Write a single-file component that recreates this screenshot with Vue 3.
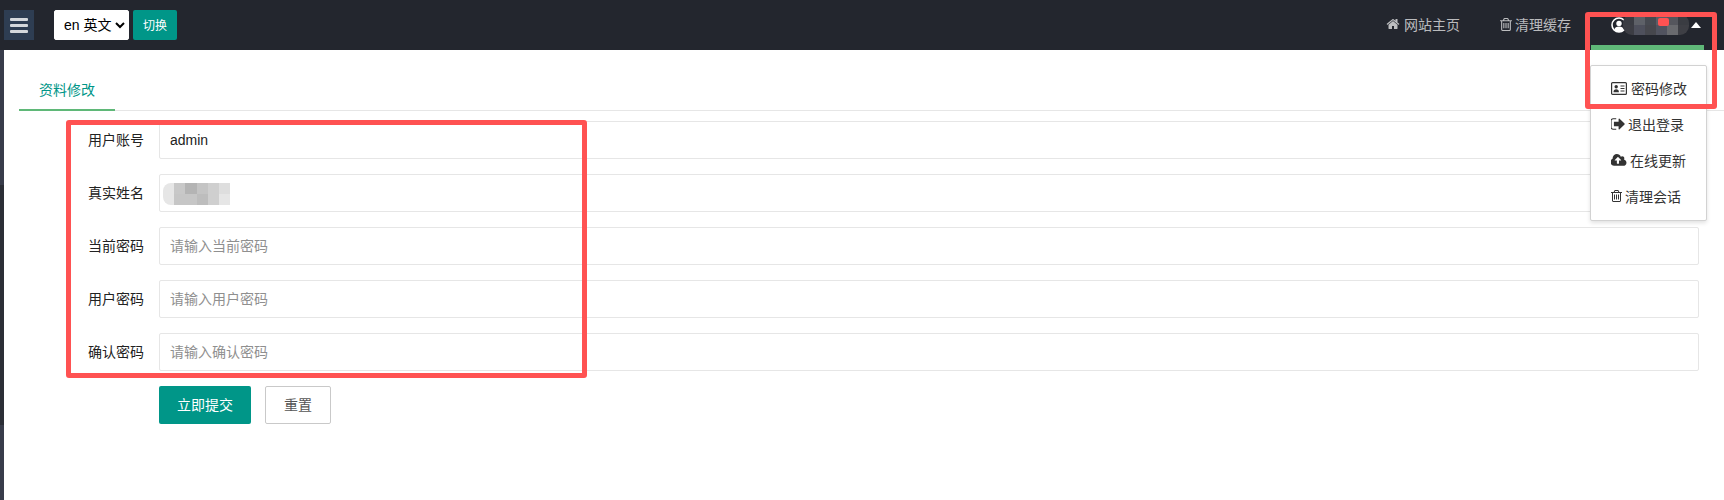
<script setup>
const fields = [
  { label: '用户账号', value: 'admin', placeholder: '' },
  { label: '真实姓名', value: '', placeholder: '', masked: true },
  { label: '当前密码', value: '', placeholder: '请输入当前密码' },
  { label: '用户密码', value: '', placeholder: '请输入用户密码' },
  { label: '确认密码', value: '', placeholder: '请输入确认密码' }
]

// pixelated patches over the user name
const navMosaic = ['#3a3c43', '#5e6168', '#474a51', '#5b5e66', '#55565d', '#3a3c42', '#3c3d44', '#4e505c', '#46474d', '#51535f', '#696a6e', '#3e3f45']
const formMosaic = ['#e6e6e6', '#c8c8c8', '#b4b4b4', '#c4c4c4', '#cfcfcf', '#dedede', '#e6e6e6', '#c6c6c6', '#c6c6c6', '#bdbdbd', '#cfcfcf', '#e6e6e6']

const homePath = 'M1472 992v480q0 26-19 45t-45 19h-384v-384h-256v384h-384q-26 0-45-19t-19-45v-480q0-1 .5-3t.5-3l575-474 575 474q1 2 1 6zm223-69l-62 74q-8 9-21 11h-3q-13 0-21-7l-692-577-692 577q-12 8-24 7-13-2-21-11l-62-74q-8-10-7-23.5t11-21.5l719-599q32-26 76-26t76 26l244 204v-195q0-14 9-23t23-9h192q14 0 23 9t9 23v408l219 182q10 8 11 21.5t-7 23.5z'
const trashPath = 'M704 736v576q0 14-9 23t-23 9h-64q-14 0-23-9t-9-23v-576q0-14 9-23t23-9h64q14 0 23 9t9 23zm256 0v576q0 14-9 23t-23 9h-64q-14 0-23-9t-9-23v-576q0-14 9-23t23-9h64q14 0 23 9t9 23zm256 0v576q0 14-9 23t-23 9h-64q-14 0-23-9t-9-23v-576q0-14 9-23t23-9h64q14 0 23 9t9 23zm128 724v-948h-896v948q0 22 7 40.5t14.5 27 10.5 8.5h832q3 0 10.5-8.5t14.5-27 7-40.5zm-672-1076h448l-48-117q-7-9-17-11h-317q-10 2-17 11zm928 32v64q0 14-9 23t-23 9h-96v948q0 83-47 143.5t-113 60.5h-832q-66 0-113-58.5t-47-141.5v-952h-96q-14 0-23-9t-9-23v-64q0-14 9-23t23-9h309l70-167q15-37 54-63t79-26h320q40 0 79 26t54 63l70 167h309q14 0 23 9t9 23z'
const signOutPath = 'M704 1440q0 4 1 20t.5 26.5-3 23.5-10 19.5-20.5 6.5h-320q-119 0-203.5-84.5t-84.5-203.5v-704q0-119 84.5-203.5t203.5-84.5h320q13 0 22.5 9.5t9.5 22.5q0 4 1 20t.5 26.5-3 23.5-10 19.5-20.5 6.5h-320q-66 0-113 47t-47 113v704q0 66 47 113t113 47h312l11.5 1 11.5 3 8 5.5 7 9 2 13.5zm928-544q0 26-19 45l-544 544q-19 19-45 19t-45-19-19-45v-288h-448q-26 0-45-19t-19-45v-384q0-26 19-45t45-19h448v-288q0-26 19-45t45-19 45 19l544 544q19 19 19 45z'
const cloudPath = 'M1216 864q0-14-9-23l-352-352q-9-9-23-9t-23 9l-351 351q-10 12-10 24 0 14 9 23t23 9h224v352q0 13 9.5 22.5t22.5 9.5h192q13 0 22.5-9.5t9.5-22.5v-352h224q13 0 22.5-9.5t9.5-22.5zm640 288q0 159-112.5 271.5t-271.5 112.5h-1088q-185 0-316.5-131.5t-131.5-316.5q0-130 70-240t188-165q-2-30-2-43 0-212 150-362t362-150q156 0 285.5 87t188.5 231q71-62 166-62 106 0 181 75t75 181q0 76-41 138 130 31 213.5 135.5t83.5 238.5z'
</script>

<template>
  <div class="page">
    <header class="top">
      <button class="menu-btn" type="button"><span></span><span></span><span></span></button>
      <select class="lang">
        <option>en 英文</option>
      </select>
      <button class="switch-btn" type="button">切换</button>

      <nav class="top-nav">
        <a class="nav-item">
          <svg class="ico" width="14" height="14" viewBox="0 0 1792 1792"><path :d="homePath" /></svg>网站主页
        </a>
        <a class="nav-item">
          <svg class="ico trash" width="12" height="13" viewBox="192 128 1408 1536"><path :d="trashPath" /></svg>清理缓存
        </a>
        <a class="nav-item user">
          <svg class="avatar" width="16" height="16" viewBox="0 0 16 16">
            <circle cx="8" cy="8" r="7" fill="none" stroke="#fff" stroke-width="1.6" />
            <circle cx="8" cy="6.4" r="2.7" fill="#fff" />
            <path d="M3.2 13c.4-2.6 2.3-3.6 4.8-3.6s4.400 1 4.800 3.600a7 7 0 0 1-9.600 0z" fill="#fff" />
          </svg>
          <span class="mosaic nav-mosaic">
            <i v-for="(c, i) in navMosaic" :key="i" :style="{ background: c }"></i>
            <b class="red-dot"></b>
          </span>
          <span class="caret"></span>
          <span class="active-bar"></span>
        </a>
      </nav>
    </header>

    <div class="body">
      <aside class="strip">
        <div class="strip-a"></div>
        <div class="strip-b"></div>
        <div class="strip-c"></div>
      </aside>

      <main class="main">
        <ul class="tabs">
          <li class="tab on">资料修改</li>
        </ul>

        <form class="form" @submit.prevent>
          <div v-for="f in fields" :key="f.label" class="row">
            <label class="row-label">{{ f.label }}</label>
            <div class="row-input">
              <input class="input" type="text" :value="f.value" :placeholder="f.placeholder" />
              <span v-if="f.masked" class="mosaic form-mosaic">
                <i v-for="(c, i) in formMosaic" :key="i" :style="{ background: c }"></i>
              </span>
            </div>
          </div>
          <div class="actions">
            <button class="btn primary" type="button">立即提交</button>
            <button class="btn plain" type="button">重置</button>
          </div>
        </form>
      </main>
    </div>

    <ul class="dropdown">
      <li>
        <svg class="dd-ico card" width="16" height="13" viewBox="0 0 16 13">
          <rect x=".6" y=".6" width="14.800" height="11.800" rx="1" fill="none" stroke="#333" stroke-width="1.200" />
          <circle cx="5.200" cy="4.800" r="1.700" fill="#333" />
          <path d="M2.500 10.200c0-2 1-2.900 2.700-2.900s2.700.9 2.700 2.900z" fill="#333" />
          <path d="M9.500 4h4M9.500 6.500h4M9.500 9h4" stroke="#333" stroke-width="1.100" />
        </svg>密码修改
      </li>
      <li>
        <svg class="dd-ico" width="14" height="14" viewBox="128 128 1536 1536"><path :d="signOutPath" /></svg>退出登录
      </li>
      <li>
        <svg class="dd-ico" width="16" height="15" viewBox="0 0 1920 1792"><path :d="cloudPath" /></svg>在线更新
      </li>
      <li>
        <svg class="dd-ico" width="11" height="12" viewBox="192 128 1408 1536"><path :d="trashPath" /></svg>清理会话
      </li>
    </ul>

    <div class="mark mark-form"></div>
    <div class="mark mark-menu"></div>
  </div>
</template>

<style>
body { margin: 0; background: #fff; }
</style>

<style scoped>
.page {
  position: relative;
  width: 1724px; height: 500px; overflow: hidden;
  display: flex; flex-direction: column;
  font: 14px "Liberation Sans", "Noto Sans CJK SC", sans-serif;
  color: #333;
}

.top {
  flex: none; height: 50px;
  display: flex; align-items: center;
  padding: 0 20px 0 4px; box-sizing: border-box;
  background: #23262e;
}

.menu-btn {
  width: 30px; height: 30px; padding: 0 6px; border: 0;
  display: flex; flex-direction: column; justify-content: center; gap: 3px;
  background: #2e3d52;
  & span { display: block; height: 3px; border-radius: 1px; background: #d5d8dc; }
}

.lang {
  width: 75px; height: 30px; margin-left: 20px; padding: 0 0 0 5px;
  border: 1px solid #fff; border-radius: 2px;
  background: #fff; color: #000;
  font: inherit;
}

.switch-btn {
  width: 44px; height: 30px; margin-left: 4px; padding: 0 0 2px;
  border: 0; border-radius: 2px;
  background: #009688; color: #fff;
  font: 12px "Liberation Sans", "Noto Sans CJK SC", sans-serif;
}

.top-nav { margin-left: auto; display: flex; height: 50px; }

.nav-item {
  display: flex; align-items: center;
  padding: 0 20px 2px; box-sizing: border-box;
  color: rgba(255, 255, 255, .7);
}

.ico { margin-right: 4px; fill: rgba(255, 255, 255, .7); }
.trash { margin-right: 3px; }

.user { position: relative; padding: 0 3px 0 20px; }
.avatar { position: relative; flex: none; }

.mosaic {
  display: grid; grid-template-rows: repeat(2, 1fr);
  & i { display: block; }
}

.nav-mosaic {
  position: relative;
  width: 66px; height: 21px; margin-top: -0.5px; margin-left: -4px;
  grid-template-columns: repeat(6, 1fr);
  border-radius: 9px; overflow: hidden;
}

.red-dot {
  position: absolute; left: 35px; top: 4px;
  width: 11px; height: 8px; border-radius: 2px;
  background: #ff5252;
}

.caret {
  width: 0; height: 0; margin-left: 2px;
  border: 5.500px solid transparent; border-top: 0;
  border-bottom: 6px solid #fff;
}

.active-bar {
  position: absolute; left: 0; right: 0; bottom: 0;
  height: 5px; background: #5fb878;
}

.body { flex: 1; display: flex; min-height: 0; }

.strip {
  flex: none; width: 4px;
  display: flex; flex-direction: column;
}
.strip-a { height: 135px; background: #383c4a; }
.strip-b { height: 240px; background: #2b2e36; }
.strip-c { flex: 1; background: #383c4a; }

.main { flex: 1; min-width: 0; padding: 20px 0 0 15px; }

.tabs {
  display: flex; margin: 0; padding: 0; list-style: none;
  height: 40px; border-bottom: 1px solid #e6e6e6;
}

.tab {
  position: relative;
  padding: 0 20px; line-height: 40px;
  color: #009688;
  &.on::after {
    content: ""; position: absolute; left: 0; right: 0; bottom: -1px;
    height: 2px; background: #5fb878;
  }
}

.form { padding: 10px 25px 0 30px; }

.row { display: flex; margin-bottom: 15px; }

.row-label {
  flex: none; width: 110px; box-sizing: border-box;
  padding-right: 15px; line-height: 38px; text-align: right;
  color: #222;
}

.row-input { position: relative; flex: 1; }

.input {
  display: block; width: 100%; height: 38px; box-sizing: border-box;
  padding: 0 10px;
  border: 1px solid #e6e6e6; border-radius: 2px;
  font: inherit; color: #222; outline: 0;
  &::placeholder { color: #8f8f8f; }
}

.form-mosaic {
  position: absolute; left: 4px; top: 9px;
  width: 67px; height: 22px;
  grid-template-columns: repeat(6, 1fr);
  border-radius: 8px 0 0 8px; overflow: hidden;
}

.actions { display: flex; gap: 14px; margin-left: 110px; }

.btn {
  height: 38px; padding: 0 0 2px; border-radius: 2px;
  font: inherit; box-sizing: border-box;
}
.primary { width: 92px; border: 0; background: #009688; color: #fff; }
.plain { width: 66px; border: 1px solid #c9c9c9; background: #fff; color: #555; }

/* user menu, hangs over the page */
.dropdown {
  position: absolute; left: 1590px; top: 65px;
  width: 117px; box-sizing: border-box;
  margin: 0; padding: 5px 0; list-style: none;
  background: #fff; border: 1px solid #d2d2d2; border-radius: 2px;
  box-shadow: 0 2px 4px rgba(0, 0, 0, .12);
  color: #333;
  & li { display: flex; align-items: center; height: 36px; padding: 0 0 2px 20px; box-sizing: border-box; }
}

.dd-ico { margin-right: 3px; fill: #333; flex: none; }
.card { margin-right: 4px; fill: none; }

/* red annotation frames drawn on the screenshot */
.mark {
  position: absolute; box-sizing: border-box;
  border: 5px solid #ff5252; border-radius: 3px;
  pointer-events: none;
}
.mark-form { left: 66px; top: 120px; width: 521px; height: 258px; }
.mark-menu { left: 1585px; top: 12px; width: 132px; height: 97px; }
</style>
